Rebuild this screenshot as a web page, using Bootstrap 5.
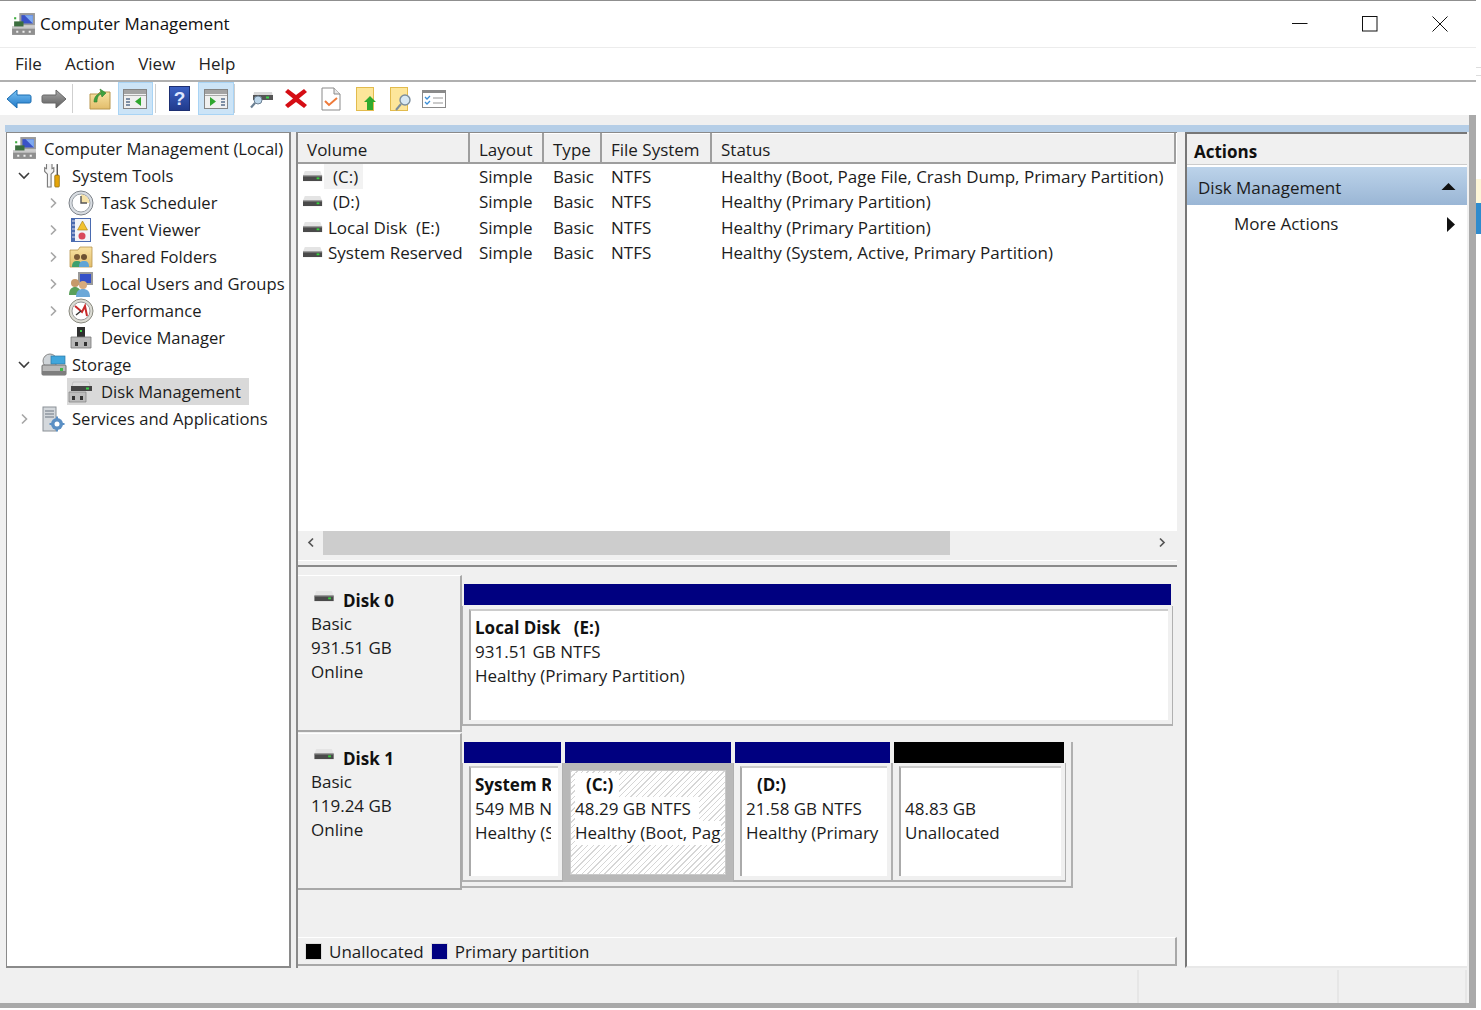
<!DOCTYPE html>
<html lang="en"><head><meta charset="utf-8"><title>Computer Management</title>
<link href="https://cdn.jsdelivr.net/npm/bootstrap@5.3.0/dist/css/bootstrap.min.css" rel="stylesheet">
<style>
html,body{height:1010px;overflow:hidden;background:#fff}
body{font-family:"Open Sans","Noto Sans",sans-serif;font-size:17px;color:#1c1c1c;line-height:24px}
svg{display:block;flex:none}
.win{width:1476px;height:1008px;border-top:1px solid #8f8f8f;background:#fff}
.side-strip{width:5px;height:1008px}
.ss1{height:67px}.ss2{height:9px;border-top:1px solid #ddd;border-bottom:1px solid #ddd}.ss3{height:103px}.ss4{height:24px;background:#fdf6d8}.ss5{height:31px;background:#2f8bcd}
.titlebar{height:47px;border-bottom:1px solid #ececec;color:#111;font-size:17px}
.titlebar .ttl{margin-left:4px}
.tt-ic{margin-left:11px}
.winbtn{width:70px;height:46px;padding-right:3px}
.menubar{height:34px;border-bottom:2px solid #b0b0b0;padding-left:15px;gap:23.2px;color:#222;font-size:17px}
.toolsbar{height:33px;padding-left:1px}
.tslot{width:35.5px;height:33px}
.tslot.tw37{width:37px}
.tslot.tw35{width:35px}
.tshift{margin-left:-2px}
.tstart{margin-left:4px}
.tactive{background:#cce4f7;border:1px solid #a9d4f5}
.tsep{width:1px;height:29px;background:#cfcfcf;margin:0 5px 0 0}
.tsep.tsp2{margin-left:2px}
.client{height:888px;background:#f0f0f0}
.leftcol{width:1469px;padding-top:10px}
.mmc{margin-left:5px;border-top:7px solid #b5cee7}
.panes{height:836px}
.treepane{width:285px;margin-left:1px;background:#fff;border:1px solid #8a8a8a;border-width:1px 2px 2px 1px;padding-top:2px}
.trow{height:27px;white-space:nowrap;font-size:16.6px}
.trow .chev{width:14px}
.lv0{padding-left:5px}.lv1{padding-left:10px}.lv2{padding-left:39px}
.tlabel{margin-left:7px}
.tlabel.tl5{margin-left:5px}
.tlabel.tl9{margin-left:9px}
.lv1 .ticon{margin-left:10px}
.lv2 .chev{margin-right:8px}
.tsel{background:#d9d9d9;height:27px;margin-left:-1px;padding-left:1px;padding-right:8px}
.centerpane{width:881px;margin-left:5px;background:#f0f0f0;border-left:2px solid #8a8a8a;border-top:1px solid #8a8a8a}
.vtable{table-layout:fixed;width:877px;margin:0;--bs-table-bg:transparent;color:#1c1c1c}
.vtable th{font-weight:400;background:#f0f0f0;height:28px;padding:4px 0 0 9px;border-right:2px solid #9e9e9e;border-bottom:2px solid #9e9e9e;border-top:1px solid #fff;box-shadow:none;line-height:24px;font-size:17px;white-space:nowrap}
.vtable td{padding:0 0 0 10px;height:25.7px;line-height:25px;white-space:nowrap;color:#1c1c1c}
.vtable td:first-child{padding-left:5px}
.vtable tbody tr:first-child td{height:25.7px}
.vc-sel{margin-left:1px;background:#f2f2f2;padding:0 5px 0 9px}
.vc-d{margin-left:10px}
.vc-n{margin-left:5px;white-space:pre}
.listarea{height:398px;background:#fff;overflow:hidden}
.hscroll{height:24px;background:#f0f0f0}
.hsa{width:25px}
.hsa svg{margin-bottom:2px}
.hsa.hsr{padding-right:5px}
.hsthumb{width:627px;height:24px;background:#cdcdcd}
.hsrest{flex:1}
.splitter{height:12px;background:#f0f0f0;border-bottom:2px solid #8a8a8a;border-top:5px solid #f0f0f0;box-shadow:inset 0 1px 0 #fff}
.diskarea{height:398px;padding-top:8px;background:#f0f0f0}
.diskrow{height:157px}
.disk1row{height:157px;margin-top:1px}
.disklabel{width:164px;background:#f0f0f0;border-top:1px solid #fff;border-bottom:2px solid #a8a8a8;border-right:2px solid #aaa;padding:12px 0 0 13px;box-shadow:inset -4px 0 0 #f0f0f0}
.dname{font-weight:700;color:#111;height:24px;padding-top:2px}
.dname svg{margin:0 8px 10px 3px}
.dparts{padding-top:9px}
.dset{padding-right:5px;padding-bottom:4px;border-right:2px solid #b0b0b0;border-bottom:2px solid #b0b0b0}
.pbar{height:21px;margin:0 2px;background:navy}
.pblack{background:#000}
.pbox{background:#f0f0f0;border-right:1px solid #b0b0b0;border-bottom:2px solid #b0b0b0;padding:3px 4px 4px 6px;border-left:1px solid #b0b0b0;white-space:nowrap}
.pin{background:#fff;border-left:2px solid #aaa;border-top:2px solid #ccc;padding:5px 5px 0 4px;height:100%}
.ps .pin{padding-right:7px}
.pclip{overflow:hidden}
.pindent{padding-left:11px}
.part0{width:711px}.pbox0{height:120px;margin-top:1px}
.pbox1{height:119px}
.ps{width:101px}.pc{width:170px}.pd{width:159px}.pu{width:174px}
.pboxc{border:7px solid #b8b8b8;padding:0;height:119px;background:#fff;white-space:nowrap}
.pinc{border:1px solid #c9c9c9;padding:2px 4px 0 4px;overflow:hidden;height:105px;background:repeating-linear-gradient(135deg,#d6d6d6 0 1px,#fff 1px 4px)}
.pinc span{background:#fff;display:inline-block;line-height:24px;height:24px}
.pinc .spc{padding:0 6px 0 11px}
.pinc .spn{padding-right:8px}
.pb{font-weight:700;color:#111}
.pbpre{white-space:pre}
.legend{height:29px;margin-top:47px;border-top:1px solid #fff;border-right:2px solid #a8a8a8;border-bottom:2px solid #a8a8a8;padding-left:7px;padding-top:1px}
.swatch{width:17px;height:17px;border:1px solid #ddd;margin-right:7px}
.swatch.sw2{margin-left:7px;background:navy}
.actionpane{width:282px;margin-left:8px;background:#fff;border-left:2px solid #777;border-top:2px solid #777;border-bottom:2px solid #e8e8e8}
.ahead{height:31px;background:#f0f0f0;font-weight:700;padding:5px 0 0 7px;color:#111;border-bottom:1px solid #ccc}
.asel{height:38px;margin-top:2px;background:linear-gradient(#bcd3ea,#9ab6d5);padding:4px 11px 0 11px;font-size:17px}
.asel svg{margin-top:-4px}
.amore{height:38px;padding-left:47px;padding-right:12px}
.grayedge{width:7px;background:#aaa}
.statusbar{height:35px;background:#f0f0f0}
.scell{height:33px;border-right:2px solid #e6e6e6;margin-top:2px}
.sc1{width:1139px}.sc2{width:200px}.sc3{width:128px}
.bottomband{height:5px;background:#a9a9a9}
.defs{position:absolute}
</style></head>
<body>
<svg class="defs" width="0" height="0">
<defs>
<linearGradient id="blue" x1="0" y1="0" x2="0" y2="1"><stop offset="0" stop-color="#7cc4f4"/><stop offset="1" stop-color="#1f78c8"/></linearGradient>
<linearGradient id="grey" x1="0" y1="0" x2="0" y2="1"><stop offset="0" stop-color="#a8a8a8"/><stop offset="1" stop-color="#5c5c5c"/></linearGradient>
<linearGradient id="folder" x1="0" y1="0" x2="0" y2="1"><stop offset="0" stop-color="#f9e3a4"/><stop offset="1" stop-color="#e2bd6b"/></linearGradient>
<linearGradient id="book" x1="0" y1="0" x2="0" y2="1"><stop offset="0" stop-color="#3d62c4"/><stop offset="1" stop-color="#203a8c"/></linearGradient>
<symbol id="drive" viewBox="0 0 22 12"><path d="M2 0h17l2 5H0z" fill="#e4e4e4"/><rect x="0" y="5" width="21" height="6" fill="#4a4a4a"/><rect x="0" y="5" width="21" height="1" fill="#8c8c8c"/><rect x="15" y="7" width="3" height="2" fill="#36d23c"/></symbol>
<symbol id="mgmt" viewBox="0 0 24 24"><rect x="8" y="1" width="15" height="12" fill="#9a9a9a"/><rect x="10" y="3" width="11" height="8" fill="#3a52c8"/><path d="M13 3h8v8z" fill="#7faaf0"/><rect x="3" y="9" width="9" height="7" fill="#3b6e3e"/><path d="M1 14h22v8H1z" fill="#8f8f8f"/><rect x="1" y="14" width="22" height="2" fill="#c9c9c9"/><path d="M5 18h2v2H5zM11 18h2v2h-2zM17 18h2v2h-2z" fill="#eee"/><rect x="3" y="5" width="2" height="2" fill="#3fae3f"/></symbol>
<symbol id="tools" viewBox="0 0 24 28"><path d="M6 1v5l-2-1v4l3 3v14h4V12l3-3V5l-2 1V1" fill="#f4f4f4" stroke="#7a7a7a" stroke-width="1.2"/><rect x="15" y="13" width="5" height="13" rx="1" fill="#e5a50a" stroke="#8a6a10" stroke-width=".8"/><rect x="17" y="1" width="1.5" height="12" fill="#555"/></symbol>
<symbol id="clock" viewBox="0 0 26 26"><circle cx="13" cy="13" r="12" fill="#d9dde2" stroke="#7d8288"/><circle cx="13" cy="13" r="9" fill="#fff" stroke="#9aa0a6"/><path d="M13 13V4.500a8.500 8.500 0 0 1 8.500 8.500z" fill="#f6e2a8"/><path d="M13 6v7h6" fill="none" stroke="#555" stroke-width="1.400"/></symbol>
<symbol id="event" viewBox="0 0 24 26"><rect x="2" y="1" width="20" height="24" fill="#4a6bb0"/><rect x="6" y="2" width="15" height="22" fill="#f2f4f8"/><path d="M13.500 4l5 9h-10z" fill="#f2c12e" stroke="#a37b0c" stroke-width=".6"/><circle cx="13" cy="19" r="3.500" fill="#d9485a"/><path d="M3 4h3M3 8h3M3 12h3M3 16h3M3 20h3" stroke="#dde" stroke-width="1"/></symbol>
<symbol id="shared" viewBox="0 0 24 24"><path d="M1 5h8l2-3h12v20H1z" fill="url(#folder)" stroke="#b8964c" stroke-width=".8"/><circle cx="8" cy="12" r="3" fill="#7a5a36"/><path d="M3 22c0-5 2-6 5-6s5 1 5 6z" fill="#3ea06c"/><circle cx="15" cy="12" r="3" fill="#6d5132"/><path d="M10 22c0-5 2-6 5-6s5 1 5 6z" fill="#5fa4d6"/></symbol>
<symbol id="users" viewBox="0 0 26 26"><rect x="10" y="1" width="15" height="13" fill="#9a9a9a"/><rect x="12" y="3" width="11" height="9" fill="#3450c8"/><circle cx="7" cy="12" r="4" fill="#c79a6a"/><path d="M1 24c0-6 3-8 6-8s6 2 6 8z" fill="#5aa05a"/><circle cx="15" cy="14" r="4" fill="#d8ab7c"/><path d="M8 26c0-6 3-8 7-8s7 2 7 8z" fill="#6ca8d8"/></symbol>
<symbol id="perf" viewBox="0 0 26 26"><circle cx="13" cy="13" r="12" fill="#dcdcd4" stroke="#8a8a80"/><circle cx="13" cy="13" r="9" fill="#fff" stroke="#999"/><path d="M7 8l7 6 3-6 2 10" fill="none" stroke="#c92a2a" stroke-width="2"/><path d="M13 13l-5 4" stroke="#333" stroke-width="1.400"/></symbol>
<symbol id="device" viewBox="0 0 22 24"><rect x="7" y="1" width="8" height="11" fill="#2f2f2f"/><rect x="10" y="4" width="2" height="2" fill="#3fd24a"/><path d="M1 11h20v11H1z" fill="#b8b8b8" stroke="#777" stroke-width=".8"/><rect x="5" y="16" width="3" height="4" fill="#333"/><rect x="14" y="16" width="3" height="4" fill="#333"/></symbol>
<symbol id="storage" viewBox="0 0 26 24"><circle cx="9" cy="8" r="7" fill="#cfd4d8" stroke="#888"/><rect x="10" y="3" width="14" height="8" fill="#41a6dc" stroke="#2d7aa6" stroke-width=".7"/><rect x="1" y="12" width="24" height="10" rx="1" fill="#b9b9b9" stroke="#707070"/><rect x="1" y="18" width="24" height="4" fill="#7e7e7e"/><rect x="19" y="15" width="3" height="3" fill="#3fb84a"/></symbol>
<symbol id="diskm" viewBox="0 0 26 22"><path d="M5 1h16l2 8H3z" fill="#dcdcdc" stroke="#aaa" stroke-width=".5"/><rect x="3" y="5" width="21" height="5" fill="#444"/><rect x="18" y="6.500" width="3" height="2" fill="#3ad44a"/><path d="M1 11h17v10H1z" fill="#bdbdbd" stroke="#7e7e7e" stroke-width=".7"/><rect x="4" y="15" width="3" height="4" fill="#333"/><rect x="12" y="15" width="3" height="4" fill="#333"/></symbol>
<symbol id="services" viewBox="0 0 24 26"><rect x="2" y="1" width="13" height="24" fill="#d4d8dc" stroke="#8a9096"/><path d="M4 5h9M4 8h9M4 11h9" stroke="#6d7782"/><circle cx="16" cy="18" r="6" fill="#5b8fc4"/><circle cx="16" cy="18" r="2.500" fill="#fff"/><path d="M16 10.500v3M16 22.500v3M8.500 18h3M20.500 18h3" stroke="#5b8fc4" stroke-width="2"/></symbol>
</defs></svg>
<div class="d-flex">
<div class="win d-flex flex-column">
  <div class="titlebar d-flex align-items-center">
    <svg class="tt-ic" width="25" height="25"><use href="#mgmt"/></svg>
    <span class="ttl">Computer Management</span>
    <div class="winbtn ms-auto d-flex align-items-center justify-content-center"><svg width="16" height="16"><path d="M0 7.500h15.500" stroke="#111"/></svg></div>
    <div class="winbtn d-flex align-items-center justify-content-center"><svg width="16" height="16"><rect x=".5" y=".5" width="14.500" height="14.500" fill="none" stroke="#111"/></svg></div>
    <div class="winbtn d-flex align-items-center justify-content-center"><svg width="16" height="16"><path d="M.5.500l15 15M15.500.500l-15 15" stroke="#111"/></svg></div>
  </div>
  <div class="menubar d-flex align-items-center"><span>File</span><span>Action</span><span>View</span><span>Help</span></div>
  <div class="toolsbar d-flex align-items-center">
    <div class="tslot d-flex align-items-center justify-content-center"><svg width="26" height="20" viewBox="0 0 26 20"><path d="M1 10L11 1v5h12c2 0 2 1 2 2v4c0 1 0 2-2 2H11v5z" fill="url(#blue)" stroke="#1a6cb0"/></svg></div>
    <div class="tslot d-flex align-items-center justify-content-center"><svg width="26" height="20" viewBox="0 0 26 20"><path d="M25 10L15 1v5H3c-2 0-2 1-2 2v4c0 1 0 2 2 2h12v5z" fill="url(#grey)" stroke="#666"/></svg></div>
    <div class="tsep"></div>
    <div class="tslot tstart d-flex align-items-center justify-content-center"><svg width="22" height="23" viewBox="0 0 22 23"><path d="M1 7h8l2-2h10v17H1z" fill="url(#folder)" stroke="#b8964c"/><path d="M5 15c0-5 3-8 7-9l-1-4 6 4-4 4-1-3c-3 1-4 4-4 8z" fill="#3fa23f" stroke="#2c7e2c" stroke-width=".6"/></svg></div>
    <div class="tslot tactive d-flex align-items-center justify-content-center"><svg width="24" height="20" viewBox="0 0 24 20"><rect x=".5" y=".5" width="23" height="19" fill="#f0f0f0" stroke="#858585"/><rect x="1" y="1" width="22" height="4" fill="#a3a3a3"/><rect x="1" y="6" width="22" height="1" fill="#aaa"/><path d="M3 9h4v2H3zM3 12h4v2H3zM3 15h4v2H3z" fill="#7e8fa5"/><path d="M18 8v9l-6-4.500z" fill="#2fa72f"/></svg></div>
    <div class="tsep tsp2"></div>
    <div class="tslot tw37 d-flex align-items-center justify-content-center"><svg width="21" height="25" viewBox="0 0 21 25"><rect x=".5" y=".5" width="20" height="24" fill="url(#book)" stroke="#1d2f72"/><text x="10.500" y="19" text-anchor="middle" font-family="Liberation Sans" font-weight="700" font-size="19" fill="#dfe8ff">?</text></svg></div>
    <div class="tslot tactive d-flex align-items-center justify-content-center"><svg width="24" height="20" viewBox="0 0 24 20"><rect x=".5" y=".5" width="23" height="19" fill="#f0f0f0" stroke="#858585"/><rect x="1" y="1" width="22" height="4" fill="#a3a3a3"/><rect x="1" y="6" width="22" height="1" fill="#aaa"/><path d="M17 9h4v2h-4zM17 12h4v2h-4zM17 15h4v2h-4z" fill="#7e8fa5"/><path d="M6 8v9l6-4.500z" fill="#2fa72f"/></svg></div>
    <div class="tsep"></div>
    <div class="tslot tw35 tstart d-flex align-items-center justify-content-center"><svg width="23" height="20" viewBox="0 0 23 20"><path d="M4 3h18l1 6H3z" fill="#d8d8d8"/><rect x="3" y="6" width="20" height="5" fill="#555"/><rect x="16" y="7.500" width="3" height="2" fill="#3ad44a"/><circle cx="8" cy="11" r="4" fill="#bcd6ea" stroke="#6b7f92"/><path d="M5 14l-4 4.500" stroke="#6b7f92" stroke-width="2.200"/></svg></div>
    <div class="tslot tw35 d-flex align-items-center justify-content-center"><svg width="22" height="21" viewBox="0 0 22 21"><path d="M3 1l8 6 8-6 3 3-8 6.500 8 6.500-3 3-8-6-8 6-3-3 8-6.500L0 4z" fill="#d50d14"/></svg></div>
    <div class="tslot tw35 d-flex align-items-center justify-content-center"><svg width="20" height="24" viewBox="0 0 20 24"><path d="M1 1h12l6 6v16H1z" fill="#fff" stroke="#8a8a8a"/><path d="M13 1v6h6" fill="#e8e8e8" stroke="#8a8a8a"/><path d="M4 14l4 4 8-7" fill="none" stroke="#ee7a3a" stroke-width="2"/></svg></div>
    <div class="tslot tw35 d-flex align-items-center justify-content-center"><svg width="20" height="24" viewBox="0 0 20 24"><rect x=".5" y=".5" width="17" height="23" fill="#fde69a" stroke="#e2bb4d"/><path d="M14 9l6 6h-3v8h-6v-8H8z" fill="#2eaa2e"/></svg></div>
    <div class="tslot tw35 d-flex align-items-center justify-content-center"><svg width="22" height="24" viewBox="0 0 22 24"><rect x=".5" y=".5" width="17" height="23" fill="#fde69a" stroke="#e2bb4d"/><circle cx="15" cy="13" r="5" fill="#d8e8f2" stroke="#7c8e9c" stroke-width="1.400"/><path d="M11 17l-5 6" stroke="#7c8e9c" stroke-width="2"/></svg></div>
    <div class="tslot tw35 tshift d-flex align-items-center justify-content-center"><svg width="24" height="18" viewBox="0 0 24 18"><rect x=".5" y=".5" width="23" height="17" fill="#fff" stroke="#8a8a8a"/><rect x="1" y="1" width="22" height="2" fill="#8a8a8a"/><path d="M3 7l2 2 3-3M3 12l2 2 3-3" fill="none" stroke="#3b8fd8" stroke-width="1.300"/><path d="M11 8h10M11 13h10" stroke="#bbb" stroke-width="1.400"/></svg></div>
  </div>
  <div class="client flex-grow-1 d-flex flex-column">
    <div class="d-flex flex-grow-1">
      <div class="leftcol">
      <div class="mmc">
        <div class="panes d-flex">
          <div class="treepane">
            <div class="trow lv0 d-flex align-items-center"><svg width="25" height="25"><use href="#mgmt"/></svg><span class="tlabel">Computer Management (Local)</span></div>
            <div class="trow lv1 d-flex align-items-center"><svg class="chev" width="14" height="10" viewBox="0 0 14 10"><path d="M2 2l5 5 5-5" fill="none" stroke="#3c3c3c" stroke-width="1.600"/></svg><svg class="ticon" width="22" height="26"><use href="#tools"/></svg><span class="tlabel tl9">System Tools</span></div>
            <div class="trow lv2 d-flex align-items-center"><svg class="chev" width="14" height="12" viewBox="0 0 14 12"><path d="M5 1.500l4.500 4.500L5 10.500" fill="none" stroke="#a6a6a6" stroke-width="1.600"/></svg><svg width="26" height="26"><use href="#clock"/></svg><span class="tlabel">Task Scheduler</span></div>
            <div class="trow lv2 d-flex align-items-center"><svg class="chev" width="14" height="12" viewBox="0 0 14 12"><path d="M5 1.500l4.500 4.500L5 10.500" fill="none" stroke="#a6a6a6" stroke-width="1.600"/></svg><svg width="26" height="26"><use href="#event"/></svg><span class="tlabel">Event Viewer</span></div>
            <div class="trow lv2 d-flex align-items-center"><svg class="chev" width="14" height="12" viewBox="0 0 14 12"><path d="M5 1.500l4.500 4.500L5 10.500" fill="none" stroke="#a6a6a6" stroke-width="1.600"/></svg><svg width="26" height="24"><use href="#shared"/></svg><span class="tlabel">Shared Folders</span></div>
            <div class="trow lv2 d-flex align-items-center"><svg class="chev" width="14" height="12" viewBox="0 0 14 12"><path d="M5 1.500l4.500 4.500L5 10.500" fill="none" stroke="#a6a6a6" stroke-width="1.600"/></svg><svg width="26" height="26"><use href="#users"/></svg><span class="tlabel">Local Users and Groups</span></div>
            <div class="trow lv2 d-flex align-items-center"><svg class="chev" width="14" height="12" viewBox="0 0 14 12"><path d="M5 1.500l4.500 4.500L5 10.500" fill="none" stroke="#a6a6a6" stroke-width="1.600"/></svg><svg width="26" height="26"><use href="#perf"/></svg><span class="tlabel">Performance</span></div>
            <div class="trow lv2 d-flex align-items-center"><span class="chev d-block"></span><svg width="26" height="24"><use href="#device"/></svg><span class="tlabel">Device Manager</span></div>
            <div class="trow lv1 d-flex align-items-center"><svg class="chev" width="14" height="10" viewBox="0 0 14 10"><path d="M2 2l5 5 5-5" fill="none" stroke="#3c3c3c" stroke-width="1.600"/></svg><svg class="ticon" width="26" height="24"><use href="#storage"/></svg><span class="tlabel tl5">Storage</span></div>
            <div class="trow lv2 d-flex align-items-center"><span class="chev d-block"></span><div class="tsel d-flex align-items-center"><svg width="26" height="22"><use href="#diskm"/></svg><span class="tlabel">Disk Management</span></div></div>
            <div class="trow lv1 d-flex align-items-center"><svg class="chev" width="14" height="12" viewBox="0 0 14 12"><path d="M5 1.500l4.500 4.500L5 10.500" fill="none" stroke="#a6a6a6" stroke-width="1.600"/></svg><svg class="ticon" width="24" height="26"><use href="#services"/></svg><span class="tlabel">Services and Applications</span></div>
          </div>
          <div class="centerpane">
            <div class="listarea">
              <table class="table table-borderless vtable">
                <colgroup><col style="width:171px"><col style="width:74px"><col style="width:58px"><col style="width:110px"><col style="width:464px"></colgroup>
                <thead><tr><th>Volume</th><th>Layout</th><th>Type</th><th>File System</th><th>Status</th></tr></thead>
                <tbody>
                <tr><td><div class="d-flex align-items-center"><svg width="20" height="11"><use href="#drive"/></svg><span class="vc-sel">(C:)</span></div></td><td>Simple</td><td>Basic</td><td>NTFS</td><td>Healthy (Boot, Page File, Crash Dump, Primary Partition)</td></tr>
                <tr><td><div class="d-flex align-items-center"><svg width="20" height="11"><use href="#drive"/></svg><span class="vc-d">(D:)</span></div></td><td>Simple</td><td>Basic</td><td>NTFS</td><td>Healthy (Primary Partition)</td></tr>
                <tr><td><div class="d-flex align-items-center"><svg width="20" height="11"><use href="#drive"/></svg><span class="vc-n">Local Disk  (E:)</span></div></td><td>Simple</td><td>Basic</td><td>NTFS</td><td>Healthy (Primary Partition)</td></tr>
                <tr><td><div class="d-flex align-items-center"><svg width="20" height="11"><use href="#drive"/></svg><span class="vc-n">System Reserved</span></div></td><td>Simple</td><td>Basic</td><td>NTFS</td><td>Healthy (System, Active, Primary Partition)</td></tr>
                </tbody>
              </table>
            </div>
            <div class="hscroll d-flex align-items-center">
              <div class="hsa d-flex justify-content-center"><svg width="9" height="11" viewBox="0 0 9 11"><path d="M7 1.500L3 5.500l4 4" fill="none" stroke="#555" stroke-width="1.700"/></svg></div>
              <div class="hsthumb"></div><div class="hsrest"></div>
              <div class="hsa hsr d-flex justify-content-center"><svg width="9" height="11" viewBox="0 0 9 11"><path d="M2 1.500l4 4-4 4" fill="none" stroke="#555" stroke-width="1.700"/></svg></div>
            </div>
            <div class="splitter"></div>
            <div class="diskarea">
              <div class="diskrow d-flex">
                <div class="disklabel">
                  <div class="dname d-flex align-items-center"><svg width="21" height="11"><use href="#drive"/></svg>Disk 0</div>
                  <div>Basic</div><div>931.51 GB</div><div>Online</div>
                </div>
                <div class="dparts">
                  <div class="part0">
                    <div class="pbar"></div>
                    <div class="pbox pbox0"><div class="pin"><div class="pclip"><div class="pb pbpre">Local Disk   (E:)</div><div>931.51 GB NTFS</div><div>Healthy (Primary Partition)</div></div></div></div>
                  </div>
                </div>
              </div>
              <div class="disk1row d-flex">
                <div class="disklabel">
                  <div class="dname d-flex align-items-center"><svg width="21" height="11"><use href="#drive"/></svg>Disk 1</div>
                  <div>Basic</div><div>119.24 GB</div><div>Online</div>
                </div>
                <div class="dparts align-self-start">
                <div class="dset d-flex align-items-start">
                  <div class="ps"><div class="pbar"></div><div class="pbox pbox1"><div class="pin"><div class="pclip"><div class="pb">System Reserved</div><div>549 MB NTFS</div><div>Healthy (System, Active, Primary Partition)</div></div></div></div></div>
                  <div class="pc"><div class="pbar"></div><div class="pboxc"><div class="pinc"><div><span class="pb spc">(C:)</span></div><div><span class="spn">48.29 GB NTFS</span></div><div class="pclip"><span>Healthy (Boot, Page File, Crash Dump, Primary Partition)</span></div></div></div></div>
                  <div class="pd"><div class="pbar"></div><div class="pbox pbox1"><div class="pin"><div class="pclip"><div class="pb pindent">(D:)</div><div>21.58 GB NTFS</div><div>Healthy (Primary Partition)</div></div></div></div></div>
                  <div class="pu"><div class="pbar pblack"></div><div class="pbox pbox1"><div class="pin"><div class="pclip"><div>&nbsp;</div><div>48.83 GB</div><div>Unallocated</div></div></div></div></div>
                </div>
                </div>
              </div>
              <div class="legend d-flex align-items-center">
                <div class="swatch bg-black"></div><span>Unallocated</span>
                <div class="swatch sw2"></div><span>Primary partition</span>
              </div>
            </div>
          </div>
          <div class="actionpane">
            <div class="ahead d-flex align-items-center">Actions</div>
            <div class="asel d-flex align-items-center justify-content-between"><span>Disk Management</span><svg width="15" height="9" viewBox="0 0 15 9"><path d="M7.500 1L14.500 8H.5z" fill="#111"/></svg></div>
            <div class="amore d-flex align-items-center justify-content-between"><span>More Actions</span><svg width="8" height="15" viewBox="0 0 8 15"><path d="M0 0l8 7.500L0 15z" fill="#111"/></svg></div>
          </div>
        </div>
      </div>
      <div class="statusbar d-flex"><div class="scell sc1"></div><div class="scell sc2"></div><div class="scell sc3"></div></div>
      </div>
      <div class="grayedge"></div>
    </div>
    <div class="bottomband"></div>
  </div>
</div>
<div class="side-strip d-flex flex-column"><div class="ss1"></div><div class="ss2"></div><div class="ss3"></div><div class="ss4"></div><div class="ss5"></div></div>
</div>
<script src="https://cdn.jsdelivr.net/npm/bootstrap@5.3.0/dist/js/bootstrap.bundle.min.js"></script>
</body></html>
